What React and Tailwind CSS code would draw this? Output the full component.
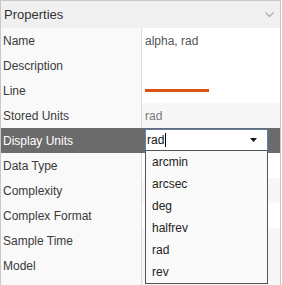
const rows = [
  { label: "Name", value: "alpha, rad", bg: "bg-white" },
  { label: "Description", value: "", bg: "bg-white" },
  { label: "Line", line: true, bg: "bg-white" },
  { label: "Stored Units", value: "rad", bg: "bg-[#f7f7f7]", muted: true },
  { label: "Display Units", selected: true },
  { label: "Data Type", bg: "bg-white" },
  { label: "Complexity", bg: "bg-[#f7f7f7]" },
  { label: "Complex Format", bg: "bg-white" },
  { label: "Sample Time", bg: "bg-[#f7f7f7]" },
  { label: "Model", bg: "bg-[#f7f7f7]" },
];

const units = ["arcmin", "arcsec", "deg", "halfrev", "rad", "rev"];

const UnitsDropdown = () => {
  return (
    <div className="absolute left-[144px] top-[1px] z-10 w-[123px]">
      {/* input */}
      <div className="flex h-[22px] items-center border border-[#5a7fb0] border-b-[#555] bg-white pl-[1px] pr-[10px]">
        <span className="text-[12px] text-[#111]">rad</span>
        <span className="ml-[1px] h-[14px] w-px bg-black" />
        <svg className="ml-auto" width="7" height="4" viewBox="0 0 7 4">
          <path d="M0 0h7L3.5 4z" fill="#111" />
        </svg>
      </div>
      {/* options */}
      <div className="border border-t-0 border-[#555] bg-[#fafafa]">
        {units.map((u) => (
          <div key={u} className="flex h-[22px] items-center pl-[6px] text-[12px] text-[#222]">
            {u}
          </div>
        ))}
      </div>
    </div>
  );
};

const App = () => {
  return (
    <div className="h-[285px] w-[282px] bg-white font-['Liberation_Sans',Arial,sans-serif]">
      <div className="flex h-full w-[281px] flex-col border-x border-t border-[#c8c8c8] bg-[#f7f7f7]">
        {/* Header */}
        <div className="flex h-[27px] shrink-0 items-center justify-between bg-[#f0f0f0] pl-[3px] pr-[6px]">
          <span className="text-[13px] text-[#333]">Properties</span>
          <svg width="9" height="6" viewBox="0 0 9 6">
            <path d="M0.5 0.5l4 4 4-4" fill="none" stroke="#b0b0b0" strokeWidth="1.3" />
          </svg>
        </div>

        {/* Rows */}
        <div className="relative flex flex-1 flex-col">
          <div className="absolute bottom-0 left-[140px] top-0 w-px bg-[#dcdcdc]" />
          {rows.map((r) =>
            r.selected ? (
              <div key={r.label} className="relative flex h-[25px] items-center bg-[#6b6b6b]">
                <span className="pl-[2px] text-[12px] text-white">{r.label}</span>
                <UnitsDropdown />
              </div>
            ) : (
              <div key={r.label} className="flex h-[25px]">
                <div className="flex w-[140px] items-center bg-[#f9f9f9] pl-[2px] text-[12px] text-[#3a3a3a]">
                  {r.label}
                </div>
                <div className={`ml-px flex flex-1 items-center pl-[3px] text-[12px] ${r.bg} ${r.muted ? "text-[#777]" : "text-[#555]"}`}>
                  {r.line ? <div className="h-[3px] w-[64px] bg-[#d95319]" /> : r.value}
                </div>
              </div>
            )
          )}
          <div className="flex flex-1">
            <div className="w-[140px] bg-[#f9f9f9]" />
          </div>
        </div>
      </div>
    </div>
  );
};

export default App;
